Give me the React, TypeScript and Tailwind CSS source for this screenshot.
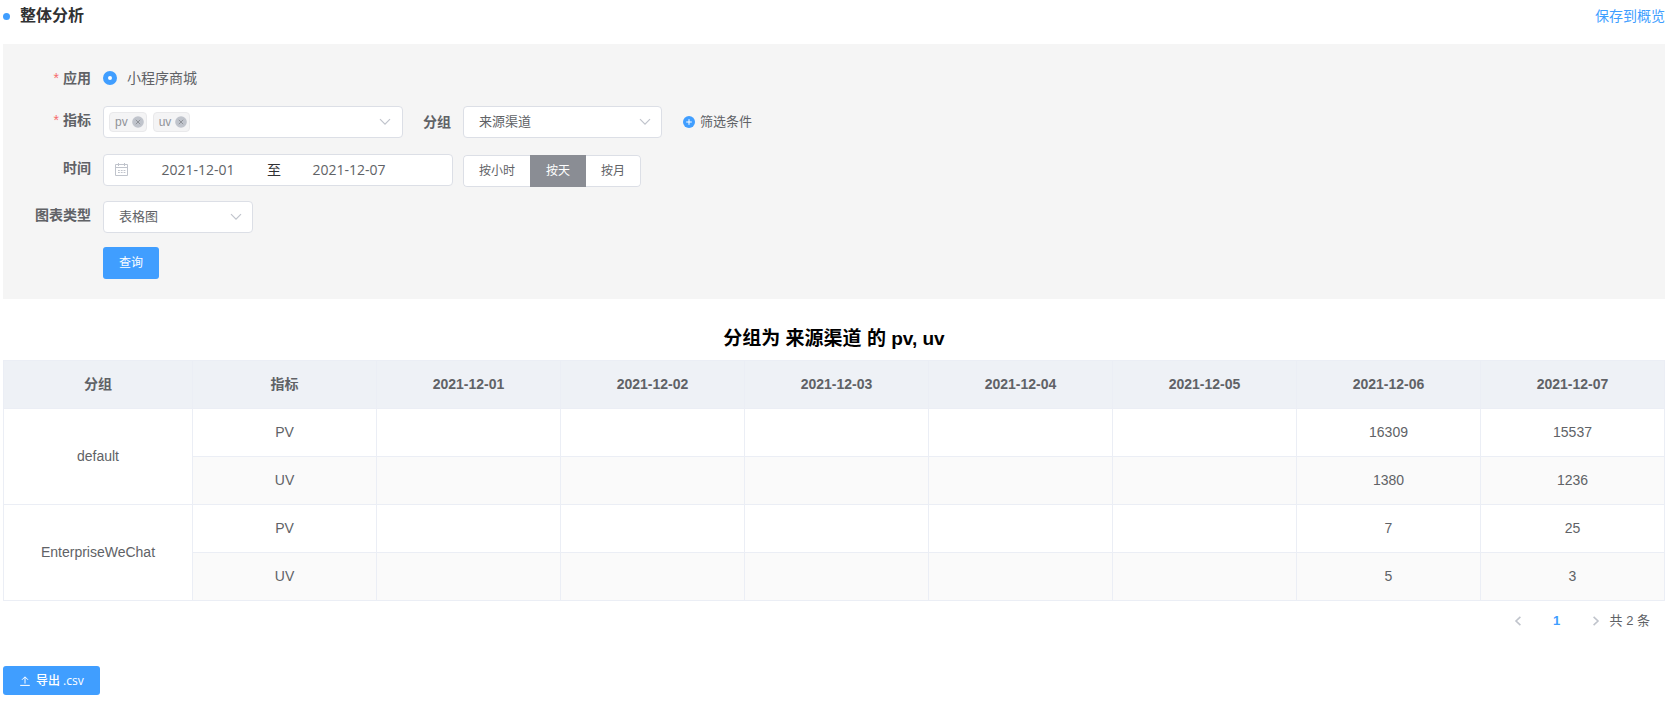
import React, { useState } from 'react';

const dates = [
  '2021-12-01',
  '2021-12-02',
  '2021-12-03',
  '2021-12-04',
  '2021-12-05',
  '2021-12-06',
  '2021-12-07',
];

const groups = [
  {
    name: 'default',
    metrics: [
      { label: 'PV', values: ['', '', '', '', '', '16309', '15537'] },
      { label: 'UV', values: ['', '', '', '', '', '1380', '1236'] },
    ],
  },
  {
    name: 'EnterpriseWeChat',
    metrics: [
      { label: 'PV', values: ['', '', '', '', '', '7', '25'] },
      { label: 'UV', values: ['', '', '', '', '', '5', '3'] },
    ],
  },
];

const granularities = ['按小时', '按天', '按月'];

function Chevron() {
  return (
    <svg
      className="pointer-events-none absolute top-1/2 right-[11px] -mt-[6px] size-3"
      viewBox="0 0 12 12"
      fill="none"
      stroke="#c0c4cc"
      strokeWidth="1.2"
      aria-hidden="true"
    >
      <path d="M1 3.2 6 8.2 11 3.2" />
    </svg>
  );
}

function Label({ text, required, htmlFor }: { text: string; required?: boolean; htmlFor?: string }) {
  return (
    <label
      htmlFor={htmlFor}
      className="w-[100px] shrink-0 pr-3 text-right text-sm leading-7 font-bold text-[#606266]"
    >
      {required && <span className="mr-1 font-normal text-[#f56c6c]">*</span>}
      {text}
    </label>
  );
}

function Select({ id, value, width }: { id: string; value: string; width: string }) {
  return (
    <div className={`relative h-8 ${width}`}>
      <select
        id={id}
        defaultValue={value}
        className="h-8 w-full appearance-none rounded border border-[#dcdfe6] bg-white px-[15px] text-[13px] text-[#606266] outline-none"
      >
        <option>{value}</option>
      </select>
      <Chevron />
    </div>
  );
}

function Tag({ text }: { text: string }) {
  return (
    <span className="flex h-5 items-center gap-1 rounded border border-[#e9e9eb] bg-[#f4f4f5] pr-[2px] pl-[5px] text-xs text-[#909399]">
      {text}
      <button type="button" aria-label={`移除 ${text}`}>
        <svg className="size-3" viewBox="0 0 12 12" aria-hidden="true">
          <circle cx="6" cy="6" r="5.8" fill="#c0c4cc" />
          <path d="M3.8 3.8 8.2 8.2M8.2 3.8 3.8 8.2" stroke="#909399" strokeWidth="1" />
        </svg>
      </button>
    </span>
  );
}

export default function App() {
  const [active, setActive] = useState('按天');

  return (
    <main className="bg-white pr-[5px] pb-[5px] pl-[3px] font-['Liberation_Sans','Noto_Sans_CJK_SC',sans-serif] text-[#606266]">
      <header className="flex h-8 items-center justify-between">
        <h1 className="flex items-center gap-[10px] text-base font-bold text-[#303133]">
          <span className="size-[7px] rounded-full bg-[#409eff]" />
          整体分析
        </h1>
        <a href="#overview" className="text-sm text-[#409eff]">
          保存到概览
        </a>
      </header>

      <form
        className="mt-3 flex flex-col gap-[14px] bg-[#f5f5f5] py-5"
        onSubmit={(e) => e.preventDefault()}
      >
        <div className="flex h-7">
          <Label text="应用" required htmlFor="app" />
          <div className="flex items-center gap-[10px] text-sm">
            <input
              id="app"
              type="radio"
              name="app"
              defaultChecked
              aria-labelledby="app-name"
              className="size-[14px] appearance-none rounded-full border-5 border-[#409eff] bg-white"
            />
            <span id="app-name">小程序商城</span>
          </div>
        </div>

        <div className="flex h-[34px] items-start">
          <Label text="指标" required />
          <div
            role="combobox"
            aria-label="指标"
            aria-expanded="false"
            className="relative flex h-8 w-[300px] items-center gap-[6px] rounded border border-[#dcdfe6] bg-white pl-[5px]"
          >
            <Tag text="pv" />
            <Tag text="uv" />
            <Chevron />
          </div>
          <label htmlFor="group" className="pr-3 pl-5 text-sm leading-8 font-bold">
            分组
          </label>
          <Select id="group" value="来源渠道" width="w-[199px]" />
          <button type="button" className="ml-[21px] flex h-8 items-center gap-[5px] text-[13px]">
            <svg className="size-3" viewBox="0 0 12 12" aria-hidden="true">
              <circle cx="6" cy="6" r="6" fill="#409eff" />
              <path d="M6 3.2V8.8M3.2 6H8.8" stroke="#fff" strokeWidth="1" />
            </svg>
            筛选条件
          </button>
        </div>

        <div className="flex h-[33px] items-start gap-[10px]">
          <div className="flex">
            <Label text="时间" htmlFor="start" />
            <div className="flex h-8 w-[350px] items-center rounded border border-[#dcdfe6] bg-white pl-[11px] text-sm">
              <svg
                className="mr-[11px] size-[14px] shrink-0"
                viewBox="0 0 14 14"
                fill="none"
                stroke="#c0c4cc"
                strokeWidth="1"
                aria-hidden="true"
              >
                <path d="M.5 1.5H12.5V12.5H.5ZM.5 4.5H12.5M3.5 0V3M9.5 0V3" />
                <path d="M3 7.5H10.5M3 9.5H10.5" strokeDasharray="1.8 1" />
              </svg>
              <input
                id="start"
                defaultValue="2021-12-01"
                aria-label="开始日期"
                className="w-[116px] text-center font-['Open_Sans',sans-serif] outline-none"
              />
              <span className="w-9 text-center text-[#303133]">至</span>
              <input
                defaultValue="2021-12-07"
                aria-label="结束日期"
                className="w-[114px] text-center font-['Open_Sans',sans-serif] outline-none"
              />
            </div>
          </div>
          <div className="flex self-end overflow-hidden rounded text-xs">
            {granularities.map((g) => (
              <button
                key={g}
                type="button"
                onClick={() => setActive(g)}
                className={
                  'h-8 border px-[15px] first:rounded-l first:border-r-0 last:rounded-r last:border-l-0 ' +
                  (g === active
                    ? 'border-[#8a8d94] bg-[#8a8d94] text-white'
                    : 'border-[#dcdfe6] bg-white text-[#606266]')
                }
              >
                {g}
              </button>
            ))}
          </div>
        </div>

        <div className="flex">
          <Label text="图表类型" htmlFor="chart" />
          <Select id="chart" value="表格图" width="w-[150px]" />
        </div>

        <div className="flex pl-[100px]">
          <button type="submit" className="h-8 rounded-[3px] bg-[#409eff] px-4 text-xs text-white">
            查询
          </button>
        </div>
      </form>

      <h2 className="mt-[26px] mb-[7px] text-center text-[19px] leading-7 font-bold text-black">
        分组为 来源渠道 的 pv, uv
      </h2>

      <table className="w-full table-fixed border-collapse text-center text-sm">
        <colgroup>
          <col className="w-[189px]" />
          <col span={8} />
        </colgroup>
        <thead>
          <tr className="h-12 bg-[#eef1f6]">
            {['分组', '指标', ...dates].map((h) => (
              <th key={h} className="border border-[#ebeef5] pb-[2px] font-bold">
                {h}
              </th>
            ))}
          </tr>
        </thead>
        <tbody>
          {groups.map((group) =>
            group.metrics.map((m, i) => (
              <tr key={group.name + m.label} className={i === 1 ? 'h-12 bg-[#fafafa]' : 'h-12'}>
                {i === 0 && (
                  <td rowSpan={2} className="border border-[#ebeef5] bg-white pb-[2px]">
                    {group.name}
                  </td>
                )}
                <td className="border border-[#ebeef5] pb-[2px]">{m.label}</td>
                {m.values.map((v, j) => (
                  <td key={dates[j]} className="border border-[#ebeef5] pb-[2px]">
                    {v}
                  </td>
                ))}
              </tr>
            )),
          )}
        </tbody>
      </table>

      <nav aria-label="分页" className="mt-[6px] flex h-7 items-center justify-end pr-[15px] text-[13px]">
        <button type="button" aria-label="上一页" className="flex w-6 justify-center">
          <svg className="size-3" viewBox="0 0 12 12" fill="none" stroke="#c0c4cc" strokeWidth="1.6" aria-hidden="true">
            <path d="M8.4 1.8 4 6 8.4 10.2" />
          </svg>
        </button>
        <button type="button" aria-current="page" className="w-[54px] font-bold text-[#409eff]">
          1
        </button>
        <button type="button" aria-label="下一页" className="flex w-6 justify-center">
          <svg className="size-3" viewBox="0 0 12 12" fill="none" stroke="#c0c4cc" strokeWidth="1.6" aria-hidden="true">
            <path d="M3.6 1.8 8 6 3.6 10.2" />
          </svg>
        </button>
        <span className="pl-[2px]">共 2 条</span>
      </nav>

      <button
        type="button"
        className="mt-[31px] flex h-[29px] items-center gap-[5px] rounded-[3px] bg-[#409eff] px-4 font-['Open_Sans','Noto_Sans_CJK_SC',sans-serif] text-xs font-medium text-white"
      >
        <svg className="size-3" viewBox="0 0 12 12" fill="none" stroke="currentColor" strokeWidth="1" aria-hidden="true">
          <path d="M6 8.6V2M3 4.8 6 1.8 9 4.8M1.2 10.4H10.8" />
        </svg>
        导出 .csv
      </button>
    </main>
  );
}
